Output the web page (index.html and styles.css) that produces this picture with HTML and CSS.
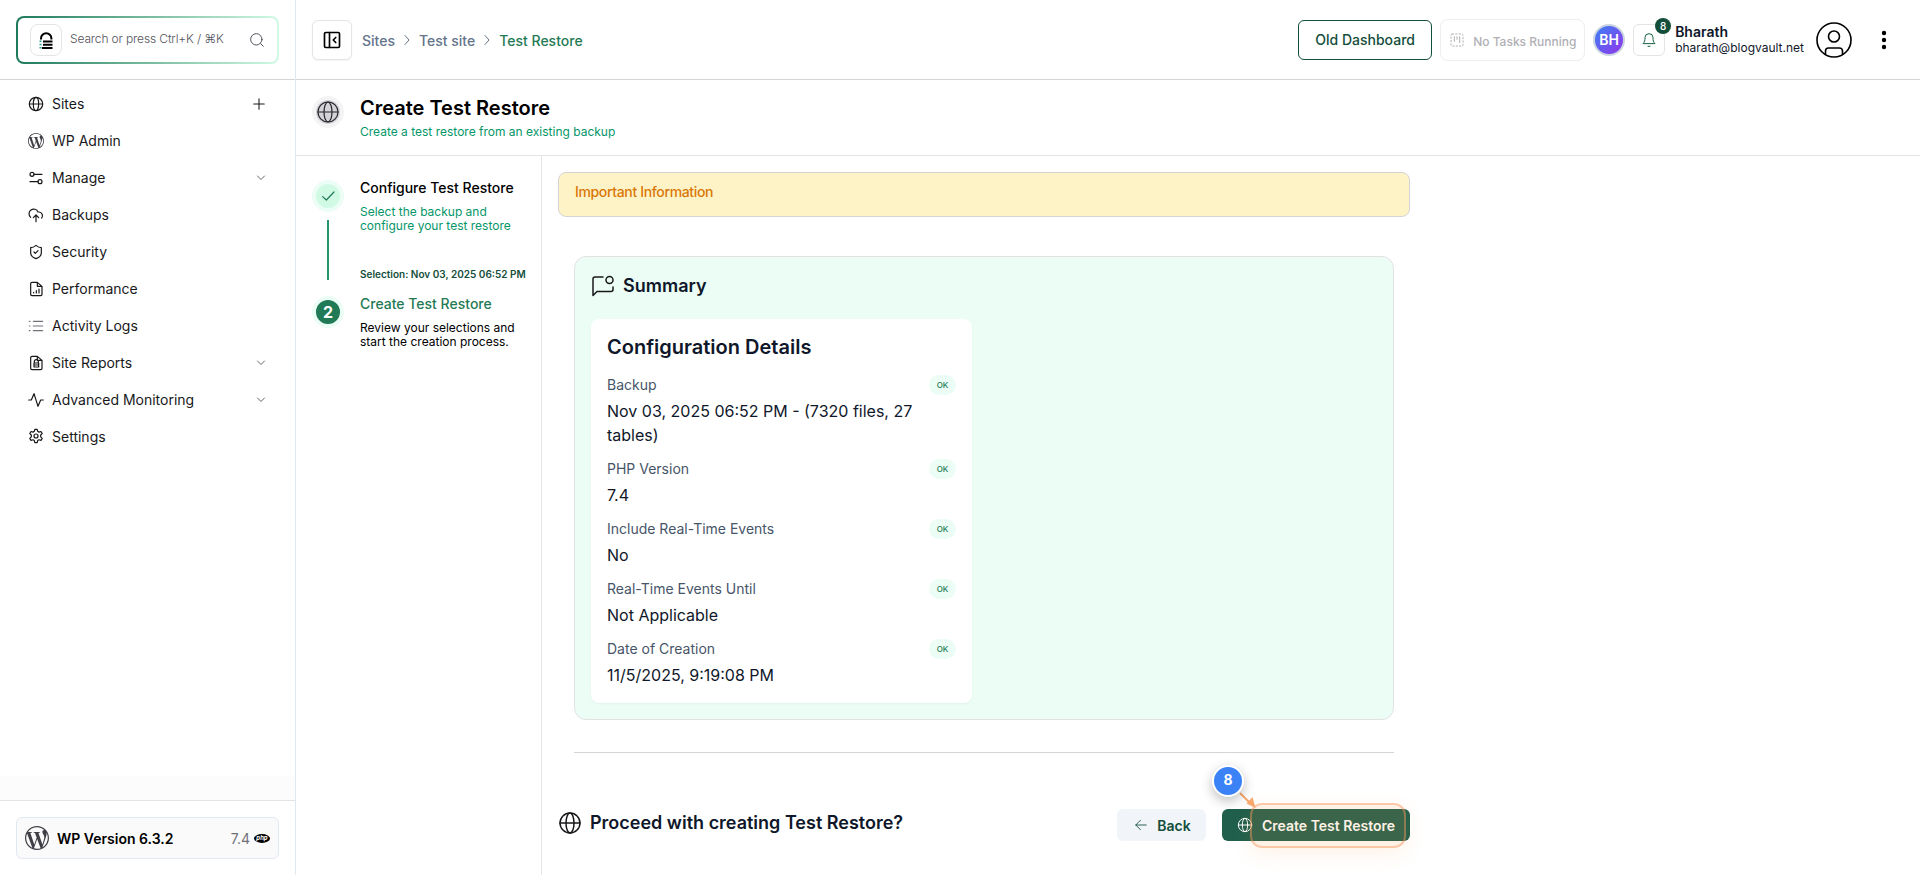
FILE: index.html
```html
<!DOCTYPE html>
<html lang="en">
<head>
<meta charset="UTF-8">
<meta name="viewport" content="width=device-width, initial-scale=1.0">
<title>Create Test Restore</title>
<link rel="stylesheet" href="styles.css">
</head>
<body>
<!-- shared icons -->
<svg class="defs" width="0" height="0">
    <symbol id="i-globe" viewBox="0 0 24 24"><circle cx="12" cy="12" r="10"/><ellipse cx="12" cy="12" rx="4" ry="10"/><path d="M2 12h20"/></symbol>
    <symbol id="i-down" viewBox="0 0 24 24"><path d="m5 8 7 7 7-7"/></symbol>
    <symbol id="i-right" viewBox="0 0 24 24"><path d="m8 3 8 9-8 9"/></symbol>
    <symbol id="i-wp" viewBox="0 0 24 24"><path d="M21.469 6.825c.84 1.537 1.318 3.3 1.318 5.175 0 3.979-2.156 7.456-5.363 9.325l3.295-9.527c.615-1.54.82-2.771.82-3.864 0-.405-.026-.78-.07-1.11m-7.981.105c.647-.03 1.232-.105 1.232-.105.582-.075.514-.93-.067-.899 0 0-1.755.135-2.88.135-1.064 0-2.85-.15-2.85-.15-.585-.03-.661.855-.075.885 0 0 .54.061 1.125.09l1.68 4.605-2.37 7.08L5.354 6.9c.649-.03 1.234-.1 1.234-.1.585-.075.516-.93-.065-.896 0 0-1.746.138-2.874.138-.2 0-.438-.008-.69-.015C4.911 3.15 8.235 1.215 12 1.215c2.809 0 5.365 1.072 7.286 2.833-.046-.003-.091-.009-.141-.009-1.06 0-1.812.923-1.812 1.914 0 .89.513 1.643 1.06 2.531.411.72.89 1.643.89 2.977 0 .915-.354 1.994-.821 3.479l-1.075 3.585-3.9-11.61zM12 22.784c-1.059 0-2.081-.153-3.048-.437l3.237-9.406 3.315 9.087c.024.053.05.101.078.149-1.12.393-2.325.609-3.582.609M1.211 12c0-1.564.336-3.05.935-4.39L7.29 21.709C3.694 19.96 1.212 16.271 1.211 12M12 0C5.385 0 0 5.385 0 12s5.385 12 12 12 12-5.385 12-12S18.615 0 12 0"/></symbol>
</svg>

<aside class="sidebar">
    <div class="search-wrap">
        <div class="search">
            <span class="logo"><svg width="14" height="17" viewBox="0 0 14 17"><path d="M2 7.500V6.500a5.200 5.200 0 0 1 10.400 0v1" fill="none" stroke="#000" stroke-width="2"/><path d="M4 8.600h9.500v1.900H4zM4 11.800h9.500v1.900H4zM3 15h10.500v1.900H3z"/><path d="M.5 8.600h2v1.500h-2zM.5 11.800h2v1.500h-2zM.5 15h2v1.500h-2z" fill="#2a9d8f"/></svg></span>
            <span class="search-text">Search or press Ctrl+K / ⌘K</span>
            <svg class="icon search-icon" width="16" height="16" viewBox="0 0 24 24"><circle cx="11" cy="11" r="8.500"/><path d="m17.500 17.500 4 4"/></svg>
        </div>
    </div>
    <nav class="nav">
        <a class="nav-item"><svg class="icon" viewBox="0 0 24 24"><use href="#i-globe"/></svg><span>Sites</span><svg class="icon plus" viewBox="0 0 24 24"><path d="M12 3v18M3 12h18"/></svg></a>
        <a class="nav-item"><svg class="icon wp" viewBox="0 0 24 24"><use href="#i-wp"/></svg><span>WP Admin</span></a>
        <a class="nav-item"><svg class="icon" viewBox="0 0 24 24"><circle cx="6" cy="6.500" r="3"/><circle cx="18" cy="17.500" r="3"/><path d="M9 6.500h12M3 17.500h12"/></svg><span>Manage</span><svg class="icon chev" viewBox="0 0 24 24"><use href="#i-down"/></svg></a>
        <a class="nav-item"><svg class="icon" viewBox="0 0 24 24"><path d="M4 15.500A7 7 0 1 1 15 7.500h1.500a5.500 5.500 0 0 1 4 9M12 22V12.500M8 16l4-4 4 4"/></svg><span>Backups</span></a>
        <a class="nav-item"><svg class="icon" viewBox="0 0 24 24"><path d="M20 13c0 5-3.500 7.500-8 9-4.500-1.500-8-4-8-9V5.500c3 0 5.500-1.300 8-3.500 2.500 2.200 5 3.500 8 3.500zM9 12l2 2 4-4"/></svg><span>Security</span></a>
        <a class="nav-item"><svg class="icon" viewBox="0 0 24 24"><path d="M14 2H6a2 2 0 0 0-2 2v16a2 2 0 0 0 2 2h13a2 2 0 0 0 2-2V8zM14 2v6h7M8.500 18v-1M12.500 18v-3.500M16.500 18v-6"/></svg><span>Performance</span></a>
        <a class="nav-item"><svg class="icon list" viewBox="0 0 24 24"><path d="M8 5h14M8 12h14M8 19h14M2 5h1M2 12h1M2 19h1"/></svg><span>Activity Logs</span></a>
        <a class="nav-item"><svg class="icon" viewBox="0 0 24 24"><path d="M14 2H6a2 2 0 0 0-2 2v16a2 2 0 0 0 2 2h13a2 2 0 0 0 2-2V8zM14 2v6h7M9.500 11.500V10a3 3 0 0 1 6 0v1.500M9 12h7v6H9zM9 15h7"/></svg><span>Site Reports</span><svg class="icon chev" viewBox="0 0 24 24"><use href="#i-down"/></svg></a>
        <a class="nav-item"><svg class="icon" viewBox="0 0 24 24"><path d="M1 12h4L9 2.500l6 19 4-9.500h4"/></svg><span>Advanced Monitoring</span><svg class="icon chev" viewBox="0 0 24 24"><use href="#i-down"/></svg></a>
        <a class="nav-item"><svg class="icon" viewBox="0 0 24 24"><path d="M10.200 2h3.600l.7 3 2 1.200 3-.9 1.800 3.100-2.300 2.100v2.800l2.300 2.200-1.800 3.100-3-.9-2 1.200-.7 3h-3.600l-.7-3-2-1.200-3 .9-1.800-3.100L5 13.300v-2.800L2.700 8.400l1.800-3.100 3 .9 2-1.200z"/><circle cx="12" cy="12" r="3"/></svg><span>Settings</span></a>
    </nav>
    <div class="fade"></div>
    <div class="side-footer">
        <div class="version">
            <svg class="wp" width="24" height="24" viewBox="0 0 24 24"><use href="#i-wp"/></svg>
            <strong>WP Version 6.3.2</strong>
            <span>7.4</span>
            <svg width="16" height="9" viewBox="0 0 16 9"><ellipse cx="8" cy="4.500" rx="8" ry="4.400"/><text x="8" y="6.300" text-anchor="middle" class="php">php</text></svg>
        </div>
    </div>
</aside>

<div class="main">
    <header class="topbar">
        <button class="toggle"><svg class="icon" width="20" height="20" viewBox="0 0 24 24"><rect x="3" y="3" width="18" height="18" rx="1.500"/><path d="M9 3v18M16.500 9l-3 3 3 3"/></svg></button>
        <div class="crumbs">
            <span>Sites</span>
            <svg class="icon" viewBox="0 0 24 24"><use href="#i-right"/></svg>
            <span>Test site</span>
            <svg class="icon" viewBox="0 0 24 24"><use href="#i-right"/></svg>
            <span class="current">Test Restore</span>
        </div>
        <button class="old-dash">Old Dashboard</button>
        <div class="tasks">
            <svg class="icon" width="16" height="16" viewBox="0 0 24 24"><rect x="3" y="3" width="18" height="18" rx="2" stroke-dasharray="2 3"/><path d="M8 7v7M12 7v4M16 7v9"/></svg>
            <span>No Tasks Running</span>
        </div>
        <div class="bh">BH</div>
        <div class="bell">
            <svg class="icon" width="16" height="16" viewBox="0 0 24 24"><path d="M3.500 17c1.800-2 2.500-4 2.500-8.500a6 6 0 0 1 12 0c0 4.500.7 6.500 2.500 8.500zM10.500 21.500h3"/></svg>
            <span class="count">8</span>
        </div>
        <div class="user">
            <strong>Bharath</strong>
            <span>bharath@blogvault.net</span>
        </div>
        <svg class="icon avatar" width="36" height="36" viewBox="0 0 36 36"><circle cx="18" cy="18" r="17"/><circle cx="18" cy="14.500" r="5.500"/><path d="M9.500 32.500V29a3 3 0 0 1 3-3h11a3 3 0 0 1 3 3v3.500"/></svg>
        <svg class="dots" width="6" height="20" viewBox="0 0 6 20"><circle cx="3" cy="3" r="2.200"/><circle cx="3" cy="10" r="2.200"/><circle cx="3" cy="17" r="2.200"/></svg>
    </header>

    <div class="page-head">
        <span class="head-icon"><svg class="icon" width="24" height="24" viewBox="0 0 24 24"><use href="#i-globe"/></svg></span>
        <div>
            <h1>Create Test Restore</h1>
            <p>Create a test restore from an existing backup</p>
        </div>
    </div>

    <div class="body">
        <div class="steps">
            <div class="step done">
                <div class="rail">
                    <span class="dot"><svg class="icon" width="16" height="16" viewBox="0 0 24 24"><path d="m4 13 5.500 5L21 6"/></svg></span>
                    <span class="line"></span>
                </div>
                <div class="step-text">
                    <h3>Configure Test Restore</h3>
                    <p>Select the backup and<br>configure your test restore</p>
                    <small>Selection: Nov 03, 2025 06:52 PM</small>
                </div>
            </div>
            <div class="step active">
                <div class="rail"><span class="dot">2</span></div>
                <div class="step-text">
                    <h3>Create Test Restore</h3>
                    <p>Review your selections and<br>start the creation process.</p>
                </div>
            </div>
        </div>

        <main class="content">
            <div class="alert">Important Information</div>
            <section class="summary">
                <h2><svg class="icon" width="24" height="24" viewBox="0 0 24 24"><path d="M12 3H4a2 2 0 0 0-2 2v16.500L6 17.500h14a2 2 0 0 0 2-2V13"/><circle cx="18.500" cy="6" r="3.500"/></svg>Summary</h2>
                <div class="card">
                    <h3>Configuration Details</h3>
                    <div class="item"><div class="label">Backup<span class="ok">OK</span></div><div class="value">Nov 03, 2025 06:52 PM - (7320 files, 27 tables)</div></div>
                    <div class="item"><div class="label">PHP Version<span class="ok">OK</span></div><div class="value">7.4</div></div>
                    <div class="item"><div class="label">Include Real-Time Events<span class="ok">OK</span></div><div class="value">No</div></div>
                    <div class="item"><div class="label">Real-Time Events Until<span class="ok">OK</span></div><div class="value">Not Applicable</div></div>
                    <div class="item"><div class="label">Date of Creation<span class="ok">OK</span></div><div class="value">11/5/2025, 9:19:08 PM</div></div>
                </div>
            </section>
            <hr>
            <div class="actions">
                <h2><svg class="icon" width="24" height="24" viewBox="0 0 24 24"><use href="#i-globe"/></svg>Proceed with creating Test Restore?</h2>
                <button class="btn back"><svg class="icon" width="14" height="14" viewBox="0 0 24 24"><path d="M21 12H3M11 4l-8 8 8 8"/></svg>Back</button>
                <button class="btn create"><svg class="icon" width="16" height="16" viewBox="0 0 24 24"><use href="#i-globe"/></svg>Create Test Restore</button>
                <!-- guide marker over the button -->
                <div class="highlight"></div>
                <svg class="arrow" width="20" height="18" viewBox="0 0 20 18"><path d="M2 2l9 9" stroke="#f9a76c" stroke-width="2"/><path d="M17.500 17L8.500 12.500l6-6.500z" fill="#f9a76c"/></svg>
                <div class="marker">8</div>
            </div>
        </main>
    </div>
</div>
</body>
</html>
```
FILE: styles.css
```css
* {
    box-sizing: border-box;
}
body {
    font-family: Inter, sans-serif;
    margin: 0;
    display: flex;
    height: 100vh;
    overflow: hidden;
    background-color: #fff;
    color: #0f172a;
    font-size: 14px;
}
h1, h2, h3, p {
    margin: 0;
    font-weight: 600;
}
button {
    font-family: inherit;
    background: #fff;
    padding: 0;
}
.defs {
    position: absolute;
}
.icon {
    fill: none;
    stroke: currentColor;
    stroke-width: 1.5;
    stroke-linecap: round;
    stroke-linejoin: round;
    flex-shrink: 0;
}

/* sidebar */
.sidebar {
    width: 296px;
    flex-shrink: 0;
    border-right: 1px solid #e2e8f0;
    display: flex;
    flex-direction: column;
}
.search-wrap {
    height: 80px;
    padding: 16px 16px 0;
    border-bottom: 1px solid #d4d4d8;
}
.search {
    height: 48px;
    border: 2px solid transparent;
    border-radius: 8px;
    background: linear-gradient(#fff, #fff) padding-box, linear-gradient(90deg, #1f7a5a, #d1fae5) border-box;
    display: flex;
    align-items: center;
    padding: 0 12px;
}
.logo {
    width: 32px;
    height: 32px;
    border: 1px solid #e4e4e7;
    border-radius: 8px;
    display: flex;
    align-items: center;
    justify-content: center;
}
.search-text {
    margin: 0 auto 3px 8px;
    font-size: 12px;
    font-weight: 300;
    letter-spacing: -0.13px;
    color: #52525b;
}
.search-icon {
    color: #52525b;
}
.nav {
    padding: 5px 28px 0;
}
.nav-item {
    display: flex;
    align-items: center;
    height: 37px;
    color: #18181b;
}
.nav-item:last-child {
    height: 36px;
}
.nav-item .icon {
    width: 16px;
    height: 16px;
    stroke-width: 1.8;
}
.nav-item span {
    margin: 0 auto 0 8px;
}
.nav-item .wp, .wp {
    fill: #3f3f46;
    stroke: none;
}
.nav-item .plus {
    width: 14px;
    height: 14px;
    margin-right: 1px;
}
.nav-item .chev {
    width: 12px;
    height: 12px;
    color: #52525b;
}
.nav-item .list {
    color: #71717a;
}
.fade {
    margin-top: auto;
    height: 24px;
    background: #fcfcfc;
}
.side-footer {
    height: 75px;
    padding: 16px;
    border-top: 1px solid #e4e4e7;
}
.version {
    height: 42px;
    border: 1px solid #e2e8f0;
    border-radius: 6px;
    background: #fafafa;
    display: flex;
    align-items: center;
    padding: 0 8px;
    color: #000;
}
.version strong {
    font-weight: 600;
    margin: 0 auto 0 8px;
}
.version span {
    color: #71717a;
    margin-right: 4px;
}
.php {
    font-size: 6px;
    font-weight: 700;
    font-style: italic;
    fill: #fff;
}

/* top bar */
.main {
    flex: 1;
    display: flex;
    flex-direction: column;
}
.topbar {
    height: 80px;
    border-bottom: 1px solid #d4d4d8;
    display: flex;
    align-items: center;
    padding: 1px 33px 0 16px;
}
.toggle {
    width: 40px;
    height: 40px;
    border: 1px solid #e4e4e7;
    border-radius: 6px;
    box-shadow: 0 1px 2px rgba(0,0,0,0.05);
    display: flex;
    align-items: center;
    justify-content: center;
    color: #000;
}
.toggle .icon {
    stroke-width: 2;
}
.crumbs {
    display: flex;
    align-items: center;
    margin: 0 auto 0 10px;
    font-weight: 500;
    color: #64748b;
}
.crumbs .icon {
    width: 12px;
    height: 12px;
    margin: 0 6px;
    stroke-width: 2;
}
.crumbs .current {
    color: #1f7a55;
}
.old-dash {
    width: 134px;
    height: 40px;
    border: 1px solid #134e3a;
    border-radius: 6px;
    color: #134e3a;
    font-size: 14px;
    font-weight: 500;
    padding-bottom: 2px;
}
.tasks {
    width: 145px;
    height: 42px;
    margin: 0 8px;
    padding-left: 8px;
    border: 1px solid #eeeeef;
    border-radius: 8px;
    display: flex;
    align-items: center;
    font-size: 12px;
    font-weight: 500;
    color: #b0b0b5;
}
.tasks span {
    margin: 3px 0 0 8px;
}
.bh {
    width: 32px;
    height: 32px;
    border: 2px solid #cbd5e1;
    border-radius: 50%;
    background: linear-gradient(135deg, #3b82f6, #9333ea);
    color: #fff;
    font-weight: 600;
    display: flex;
    align-items: center;
    justify-content: center;
    padding-bottom: 2px;
}
.bell {
    position: relative;
    width: 32px;
    height: 32px;
    margin: 0 10px 0 8px;
    border: 1px solid #e4e4e7;
    border-radius: 6px;
    color: #14603f;
    display: flex;
    align-items: center;
    justify-content: center;
}
.count {
    position: absolute;
    top: -7px;
    right: -7px;
    width: 16px;
    height: 16px;
    border-radius: 50%;
    background: #134e3a;
    color: #fff;
    font-size: 10px;
    font-weight: 500;
    line-height: 16px;
    text-align: center;
}
.user {
    display: flex;
    flex-direction: column;
    margin-bottom: 1px;
    font-size: 12px;
    line-height: 15px;
}
.user strong {
    font-size: 14px;
    font-weight: 600;
    line-height: 16px;
}
.avatar {
    margin: 0 29px 0 12px;
    color: #000;
    stroke-width: 1.6;
}
.dots {
    fill: #000;
}

/* page */
.page-head {
    height: 76px;
    border-bottom: 1px solid #e4e4e7;
    padding: 16px;
    display: flex;
    gap: 16px;
}
.head-icon {
    width: 32px;
    height: 32px;
    border: 4px solid #f4f4f5;
    border-radius: 50%;
    background: #d4d4d8;
    display: flex;
    color: #27272a;
}
.head-icon .icon {
    stroke-width: 1.2;
}
.page-head h1 {
    font-size: 20px;
    line-height: 24px;
    color: #000;
}
.page-head p {
    font-size: 12px;
    font-weight: 400;
    line-height: 16px;
    margin-top: 4px;
    color: #059669;
}
.body {
    flex: 1;
    display: flex;
}
.steps {
    width: 246px;
    border-right: 1px solid #e4e4e7;
    padding: 24px 0 0 16px;
}
.step {
    display: flex;
    gap: 16px;
    height: 116px;
}
.rail {
    display: flex;
    flex-direction: column;
    align-items: center;
}
.dot {
    width: 32px;
    height: 32px;
    border: 4px solid #ecfdf5;
    border-radius: 50%;
    display: flex;
    align-items: center;
    justify-content: center;
    background: #d1fae5;
    color: #1f7a55;
}
.dot .icon {
    stroke-width: 1.8;
}
.active .dot {
    background: #1f7a55;
    color: #fff;
    font-size: 16px;
    font-weight: 700;
}
.line {
    width: 2px;
    height: 60px;
    margin-top: 8px;
    background: #259669;
}
.step h3 {
    font-size: 14px;
    font-weight: 500;
    line-height: 16px;
    color: #000;
}
.step p {
    margin-top: 9px;
    font-size: 12px;
    font-weight: 400;
    line-height: 14px;
    color: #000;
    white-space: nowrap;
}
.step.done p {
    color: #059669;
}
.step small {
    display: block;
    margin-top: 34px;
    font-size: 10px;
    font-weight: 600;
    line-height: 15px;
    color: #134e3a;
    white-space: nowrap;
}
.step.active h3 {
    color: #1f7a55;
}
.content {
    width: 884px;
    padding: 16px;
}
.alert {
    height: 45px;
    border: 1px solid #d4d4d8;
    border-radius: 8px;
    background: #fef3c7;
    padding: 10px 16px;
    font-weight: 500;
    letter-spacing: -0.35px;
    line-height: 18px;
    color: #d97706;
}
.summary {
    margin: 39px 16px 0;
    height: 464px;
    border: 1px solid #e2e2e5;
    border-radius: 12px;
    background: #ecfdf5;
    padding: 15px 16px;
}
h2 {
    display: flex;
    align-items: center;
    gap: 8px;
    font-size: 18px;
    line-height: 28px;
}
h2 .icon {
    color: #18181b;
}
.card {
    width: 381px;
    height: 384px;
    margin-top: 19px;
    padding: 16px;
    border-radius: 8px;
    background: #fff;
    box-shadow: 0 1px 2px rgba(0,0,0,0.05);
}
.card h3 {
    font-size: 20px;
    line-height: 24px;
    margin-bottom: 16px;
}
.item {
    margin-bottom: 12px;
}
.label {
    display: flex;
    align-items: center;
    justify-content: space-between;
    line-height: 20px;
    color: #475569;
}
.ok {
    width: 27px;
    border-radius: 10px;
    background: #ecfdf5;
    color: #1f7a55;
    font-size: 8px;
    font-weight: 500;
    text-align: center;
}
.value {
    margin-top: 4px;
    font-size: 16px;
    line-height: 24px;
}
hr {
    margin: 32px 16px 0;
    border: 0;
    border-top: 1px solid #d4d4d8;
}
.actions {
    position: relative;
    margin-top: 56px;
    height: 32px;
    display: flex;
    align-items: center;
}
.actions h2 {
    margin: 0 auto 5px 0;
}
.btn {
    height: 32px;
    border: 0;
    border-radius: 6px;
    display: flex;
    align-items: center;
    justify-content: center;
    gap: 9px;
    font-size: 14px;
    font-weight: 600;
}
.back {
    width: 89px;
    padding-left: 2px;
    background: #f1f5f9;
    color: #134e3a;
}
.create {
    width: 188px;
    margin-left: 16px;
    background: #1f5f4c;
    color: #fff;
}
.highlight {
    position: absolute;
    right: 4px;
    top: -6px;
    width: 156px;
    height: 45px;
    border: 2px solid rgba(249,150,90,0.45);
    border-radius: 12px;
    background: rgba(251,146,60,0.13);
    box-shadow: 0 6px 20px rgba(251,146,60,0.12);
}
.marker {
    position: absolute;
    right: 166px;
    top: -44px;
    width: 32px;
    height: 32px;
    border: 2px solid #fff;
    border-radius: 50%;
    background: #3b82f6;
    box-shadow: 0 4px 12px rgba(0,0,0,0.25);
    color: #fff;
    font-weight: 700;
    line-height: 26px;
    text-align: center;
}
.arrow {
    position: absolute;
    right: 152px;
    top: -18px;
    fill: none;
}
```
